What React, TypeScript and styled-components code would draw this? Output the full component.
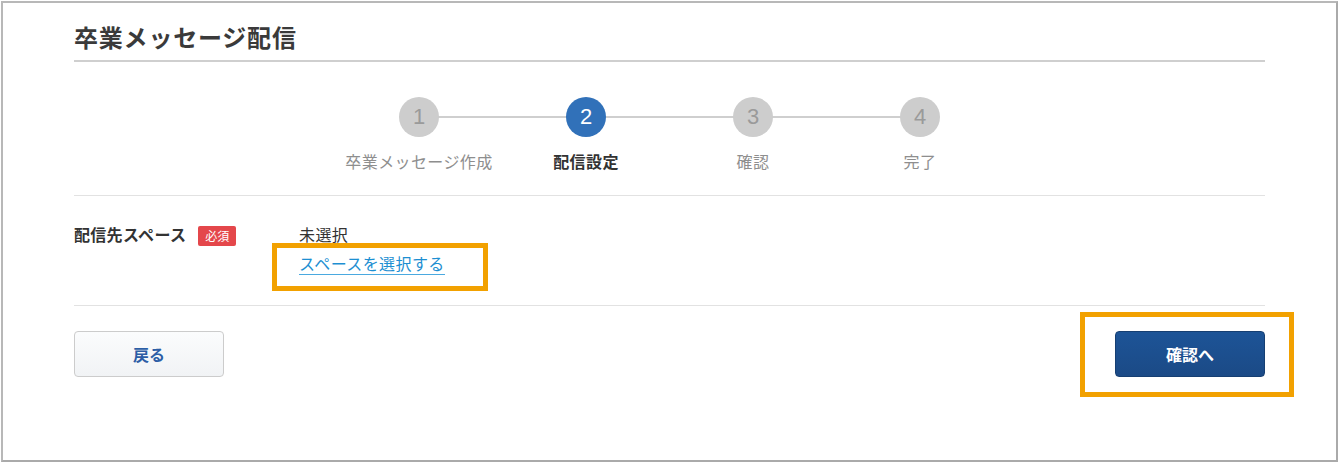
import styled, { createGlobalStyle } from "styled-components";

const Steps = [
  { num: 1, title: "卒業メッセージ作成" },
  { num: 2, title: "配信設定" },
  { num: 3, title: "確認" },
  { num: 4, title: "完了" },
];

const CURRENT = 2;

export default function App() {
  return (
    <>
      <GlobalStyle />
      <Frame>
        <Title>卒業メッセージ配信</Title>

        <Stepper>
          {Steps.map((step) => (
            <Step key={step.num} $last={step.num === Steps.length}>
              <Circle $active={step.num === CURRENT}>{step.num}</Circle>
              <StepLabel $active={step.num === CURRENT}>{step.title}</StepLabel>
            </Step>
          ))}
        </Stepper>

        <FormRow>
          <FieldLabel>
            配信先スペース
            <Required>必須</Required>
          </FieldLabel>
          <FieldValue>
            <span>未選択</span>
            <Highlight $inset="-10px -43px -16px -27px">
              <SelectLink href="#">スペースを選択する</SelectLink>
            </Highlight>
          </FieldValue>
        </FormRow>

        <Footer>
          <BackButton>戻る</BackButton>
          <Highlight $inset="-19px -29px -20px -35px">
            <NextButton>確認へ</NextButton>
          </Highlight>
        </Footer>
      </Frame>
    </>
  );
}

const GlobalStyle = createGlobalStyle`
  body {
    margin: 0;
    background: #fff;
    font-family: "Noto Sans CJK JP", "Noto Sans", sans-serif;
    color: #333;
  }
`;

const Frame = styled.div`
  box-sizing: border-box;
  margin: 1px 0 0 1px;
  width: 1337px;
  height: 461px;
  border: 2px solid #b8b8b8;
  border-right-color: #aaa;
  border-bottom-color: #aaa;
  padding: 0 71px;
  background: #fff;
`;

const Title = styled.h1`
  margin: 0;
  padding: 19px 0 8px;
  font-size: 24px;
  line-height: 30px;
  font-weight: 700;
  letter-spacing: 0.8px;
  color: #3a3a3a;
  border-bottom: 2px solid #cfcfcf;
`;

const Stepper = styled.div`
  display: flex;
  justify-content: center;
  padding: 35px 0 23px;
  border-bottom: 1px solid #e2e2e2;
`;

const Step = styled.div<{ $last: boolean }>`
  position: relative;
  width: 167px;
  display: flex;
  flex-direction: column;
  align-items: center;
  gap: 13px;

  &::after {
    content: "";
    display: ${(p) => (p.$last ? "none" : "block")};
    position: absolute;
    top: 19px;
    left: 50%;
    width: 100%;
    height: 2px;
    background: #cfcfcf;
  }
`;

const Circle = styled.div<{ $active: boolean }>`
  position: relative;
  z-index: 1;
  width: 40px;
  height: 40px;
  border-radius: 50%;
  display: flex;
  align-items: center;
  justify-content: center;
  background: ${(p) => (p.$active ? "#3171b9" : "#cdcdcd")};
  color: ${(p) => (p.$active ? "#fff" : "#9a9a9a")};
  font-family: "Liberation Sans", "Noto Sans", sans-serif;
  font-size: 22px;
`;

const StepLabel = styled.div<{ $active: boolean }>`
  font-size: 16px;
  line-height: 22px;
  letter-spacing: 0.4px;
  white-space: nowrap;
  font-weight: ${(p) => (p.$active ? 700 : 400)};
  color: ${(p) => (p.$active ? "#333" : "#8e8e8e")};
`;

const FormRow = styled.div`
  display: flex;
  padding: 27px 0 30px;
  border-bottom: 1px solid #e2e2e2;
`;

const FieldLabel = styled.div`
  width: 225px;
  display: flex;
  align-items: flex-start;
  gap: 12px;
  font-size: 16px;
  line-height: 22px;
  font-weight: 700;
  letter-spacing: 0.3px;
  color: #333;
`;

const Required = styled.span`
  margin-top: 3px;
  width: 38px;
  height: 20px;
  display: inline-flex;
  align-items: center;
  justify-content: center;
  border-radius: 2px;
  background: #e4474b;
  color: #fff;
  font-size: 12px;
  font-weight: 400;
  letter-spacing: 0;
`;

const FieldValue = styled.div`
  display: flex;
  flex-direction: column;
  align-items: flex-start;
  gap: 8px;
  font-size: 16px;
  line-height: 22px;
  letter-spacing: 0.4px;
  color: #333;
`;

const Highlight = styled.div<{ $inset: string }>`
  position: relative;
  display: inline-flex;

  &::before {
    content: "";
    position: absolute;
    inset: ${(p) => p.$inset};
    border: 5px solid #f2a100;
    pointer-events: none;
  }
`;

const SelectLink = styled.a`
  color: #1d8fd2;
  text-decoration: none;
  border-bottom: 1px solid #4aa9e0;
  line-height: 21px;
`;

const Footer = styled.div`
  display: flex;
  justify-content: space-between;
  align-items: flex-start;
  padding-top: 25px;
`;

const BaseButton = styled.button`
  width: 150px;
  height: 46px;
  border-radius: 4px;
  font-family: "Noto Sans CJK JP", "Noto Sans", sans-serif;
  font-size: 16px;
  font-weight: 700;
  cursor: pointer;
`;

const BackButton = styled(BaseButton)`
  border: 1px solid #cccccc;
  background: linear-gradient(#fbfcfd, #f1f3f5);
  color: #2c5ea6;
`;

const NextButton = styled(BaseButton)`
  border: 1px solid #163f72;
  background: linear-gradient(#1d5497, #1b4a86);
  color: #fff;
`;
